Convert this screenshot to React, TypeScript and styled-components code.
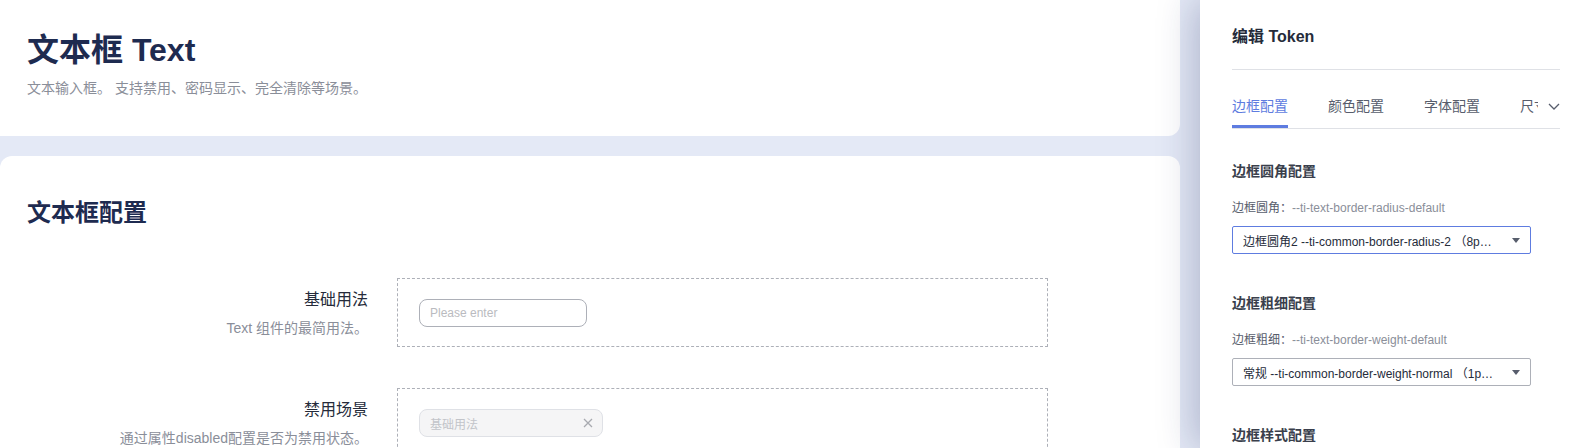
import React from "react";
import styled, { createGlobalStyle } from "styled-components";

const GlobalStyle = createGlobalStyle`
  * { box-sizing: border-box; }
  html, body { margin: 0; padding: 0; }
  body {
    font-family: "Liberation Sans", "Noto Sans CJK SC", sans-serif;
    background: #e4e9f6;
    color: #252b3a;
  }
`;

const Page = styled.div`
  display: flex;
  width: 1586px;
  height: 448px;
  overflow: hidden;
  background: #e4e9f6;
`;

const Main = styled.main`
  flex: 1;
  display: flex;
  flex-direction: column;
  gap: 20px;
  padding-right: 20px;
  min-width: 0;
`;

const HeaderCard = styled.section`
  flex: none;
  height: 136px;
  background: #fff;
  border-radius: 0 0 12px 0;
  padding: 30px 27px 0;
`;

const PageTitle = styled.h1`
  margin: 0;
  font-size: 32px;
  line-height: 40px;
  font-weight: 700;
  color: #1e2b50;
`;

const PageDesc = styled.p`
  margin: 7px 0 0;
  font-size: 14px;
  line-height: 22px;
  color: #8a8e99;
`;

const ConfigCard = styled.section`
  flex: 1;
  background: #fff;
  border-radius: 12px 12px 0 0;
  padding: 41px 27px 0;
`;

const SectionTitle = styled.h2`
  margin: 0 0 49px;
  font-size: 24px;
  line-height: 32px;
  font-weight: 700;
  color: #1e2b50;
`;

const DemoList = styled.div`
  display: flex;
  flex-direction: column;
  gap: 41px;
`;

const DemoRow = styled.div`
  display: grid;
  grid-template-columns: 341px 651px;
  column-gap: 29px;
`;

const DemoInfo = styled.div`
  padding-top: 10px;
  text-align: right;
`;

const DemoName = styled.div`
  font-size: 16px;
  line-height: 24px;
  color: #252b3a;
`;

const DemoDesc = styled.div`
  margin-top: 6px;
  font-size: 14px;
  line-height: 20px;
  color: #8a8e99;
`;

const DemoBox = styled.div`
  border: 1px dashed #adb0b8;
  padding: 20px 21px 19px;
`;

const TextInput = styled.div<{ $disabled?: boolean; $width: number }>`
  display: flex;
  align-items: center;
  justify-content: space-between;
  width: ${(p) => p.$width}px;
  height: 28px;
  padding: 0 9px 0 10px;
  border: 1px solid ${(p) => (p.$disabled ? "#dfe1e6" : "#adb0b8")};
  background: ${(p) => (p.$disabled ? "#f5f5f6" : "#fff")};
  border-radius: 8px;
  font-size: 12px;
  color: ${(p) => (p.$disabled ? "#c2c4c9" : "#babbc0")};
`;

const ClearIcon = () => (
  <svg width="10" height="10" viewBox="0 0 10 10" aria-hidden="true">
    <path d="M1 1 L9 9 M9 1 L1 9" stroke="#a8aab0" strokeWidth="1.3" fill="none" />
  </svg>
);

const Sidebar = styled.aside`
  flex: none;
  width: 386px;
  background: #fff;
  z-index: 1;
  box-shadow: -4px 0 36px rgba(30, 40, 90, 0.28);
  padding: 25px 26px 0 32px;
`;

const SidebarTitle = styled.div`
  font-size: 16px;
  line-height: 24px;
  font-weight: 700;
  color: #252b3a;
  padding-bottom: 20px;
  border-bottom: 1px solid #dfe1e6;
`;

const TabsBar = styled.div`
  display: flex;
  align-items: center;
  margin-top: 18px;
  border-bottom: 1px solid #dfe1e6;
`;

const TabViewport = styled.div`
  flex: 1;
  display: flex;
  gap: 40px;
  overflow: hidden;
  min-width: 0;
`;

const Tab = styled.div<{ $active?: boolean }>`
  flex: none;
  font-size: 14px;
  line-height: 20px;
  padding-top: 8px;
  padding-bottom: 9px;
  border-bottom: 3px solid ${(p) => (p.$active ? "#5e7ce0" : "transparent")};
  color: ${(p) => (p.$active ? "#5e7ce0" : "#575d6c")};
`;

const MoreButton = styled.div`
  flex: none;
  width: 22px;
  display: flex;
  justify-content: flex-end;
  align-items: center;
  padding-bottom: 3px;
`;

const Section = styled.div`
  margin-top: 31px;
  & + & {
    margin-top: 38px;
  }
`;

const GroupTitle = styled.div`
  font-size: 14px;
  line-height: 22px;
  font-weight: 700;
  color: #3a3f4c;
  margin-bottom: 17px;
`;

const FieldLabel = styled.div`
  font-size: 12px;
  line-height: 18px;
  color: #575d6c;
  margin-bottom: 9px;
`;

const FieldToken = styled.span`
  color: #8a8e99;
`;

const Select = styled.div<{ $focused?: boolean }>`
  display: flex;
  align-items: center;
  width: 299px;
  height: 28px;
  padding: 0 10px 0 10px;
  border: 1px solid ${(p) => (p.$focused ? "#5e7ce0" : "#adb0b8")};
  border-radius: 2px;
  font-size: 12px;
  color: #252b3a;
  gap: 18px;
`;

const SelectValue = styled.span`
  flex: 1;
  min-width: 0;
  white-space: nowrap;
  overflow: hidden;
  text-overflow: ellipsis;
`;

const Caret = () => (
  <svg width="8" height="5" viewBox="0 0 8 5" aria-hidden="true">
    <path d="M0 0 H8 L4 5 Z" fill="#575d6c" />
  </svg>
);

const Chevron = () => (
  <svg width="12" height="7" viewBox="0 0 12 7" aria-hidden="true">
    <path d="M1 1 L6 6 L11 1" stroke="#575d6c" strokeWidth="1.3" fill="none" />
  </svg>
);

const groups = [
  {
    title: "边框圆角配置",
    label: "边框圆角：",
    token: "--ti-text-border-radius-default",
    value: "边框圆角2 --ti-common-border-radius-2 （8px）",
    focused: true,
  },
  {
    title: "边框粗细配置",
    label: "边框粗细：",
    token: "--ti-text-border-weight-default",
    value: "常规 --ti-common-border-weight-normal （1px）",
    focused: false,
  },
  {
    title: "边框样式配置",
    label: "边框样式：",
    token: "--ti-text-border-style-default",
    value: "实线 --ti-common-border-style-solid （solid）",
    focused: false,
  },
];

export default function App() {
  return (
    <>
      <GlobalStyle />
      <Page>
        <Main>
          <HeaderCard>
            <PageTitle>文本框 Text</PageTitle>
            <PageDesc>文本输入框。 支持禁用、密码显示、完全清除等场景。</PageDesc>
          </HeaderCard>
          <ConfigCard>
            <SectionTitle>文本框配置</SectionTitle>
            <DemoList>
              <DemoRow>
                <DemoInfo>
                  <DemoName>基础用法</DemoName>
                  <DemoDesc>Text 组件的最简用法。</DemoDesc>
                </DemoInfo>
                <DemoBox>
                  <TextInput $width={168}>Please enter</TextInput>
                </DemoBox>
              </DemoRow>
              <DemoRow>
                <DemoInfo>
                  <DemoName>禁用场景</DemoName>
                  <DemoDesc>通过属性disabled配置是否为禁用状态。</DemoDesc>
                </DemoInfo>
                <DemoBox>
                  <TextInput $width={184} $disabled>
                    基础用法
                    <ClearIcon />
                  </TextInput>
                </DemoBox>
              </DemoRow>
            </DemoList>
          </ConfigCard>
        </Main>
        <Sidebar>
          <SidebarTitle>编辑 Token</SidebarTitle>
          <TabsBar>
            <TabViewport>
              <Tab $active>边框配置</Tab>
              <Tab>颜色配置</Tab>
              <Tab>字体配置</Tab>
              <Tab>尺寸配置</Tab>
            </TabViewport>
            <MoreButton>
              <Chevron />
            </MoreButton>
          </TabsBar>
          {groups.map((g) => (
            <Section key={g.title}>
              <GroupTitle>{g.title}</GroupTitle>
              <FieldLabel>
                {g.label}
                <FieldToken>{g.token}</FieldToken>
              </FieldLabel>
              <Select $focused={g.focused}>
                <SelectValue>{g.value}</SelectValue>
                <Caret />
              </Select>
            </Section>
          ))}
        </Sidebar>
      </Page>
    </>
  );
}
